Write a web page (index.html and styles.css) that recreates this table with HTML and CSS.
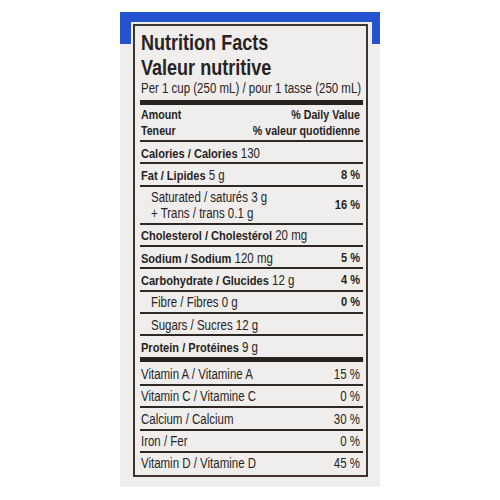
FILE: index.html
```html
<!DOCTYPE html>
<html>
<head>
<meta charset="utf-8">
<link rel="stylesheet" href="styles.css">
</head>
<body>
<div class="panel">
  <div class="sheet">
    <div class="label">
      <div class="inner">
        <div class="title">Nutrition Facts</div>
        <div class="title">Valeur nutritive</div>
        <div class="serving">Per 1 cup (250 mL) / pour 1 tasse (250 mL)</div>
        <div class="thick"></div>
        <div class="head">
          <div class="hrow"><span>Amount</span><span>% Daily Value</span></div>
          <div class="hrow"><span>Teneur</span><span>% valeur quotidienne</span></div>
        </div>
        <div class="row"><span><b>Calories / Calories</b> 130</span></div>
        <div class="row"><span><b>Fat / Lipides</b> 5 g</span><b class="pct">8 %</b></div>
        <div class="row sub">
          <div class="lines"><span>Saturated / saturés 3 g</span><span>+ Trans / trans 0.1 g</span></div>
          <b class="pct">16 %</b>
        </div>
        <div class="row"><span><b>Cholesterol / Cholestérol</b> 20 mg</span></div>
        <div class="row"><span><b>Sodium / Sodium</b> 120 mg</span><b class="pct">5 %</b></div>
        <div class="row"><span><b>Carbohydrate / Glucides</b> 12 g</span><b class="pct">4 %</b></div>
        <div class="row sub"><span>Fibre / Fibres 0 g</span><b class="pct">0 %</b></div>
        <div class="row sub"><span>Sugars / Sucres 12 g</span></div>
        <div class="row"><span><b>Protein / Protéines</b> 9 g</span></div>
        <div class="thick2"></div>
        <div class="vrow first"><span>Vitamin A / Vitamine A</span><span class="pct">15 %</span></div>
        <div class="vrow"><span>Vitamin C / Vitamine C</span><span class="pct">0 %</span></div>
        <div class="vrow"><span>Calcium / Calcium</span><span class="pct">30 %</span></div>
        <div class="vrow"><span>Iron / Fer</span><span class="pct">0 %</span></div>
        <div class="vrow"><span>Vitamin D / Vitamine D</span><span class="pct">45 %</span></div>
      </div>
    </div>
  </div>
</div>
</body>
</html>
```
FILE: styles.css
```css
html, body {
  margin: 0;
  padding: 0;
  background: #ffffff;
}
body {
  font-family: "Liberation Sans", Arial, sans-serif;
  color: #28231f;
}
.panel {
  margin: 12px 0 0 120px;
  width: 260px;
  height: 475px;
  box-sizing: border-box;
  padding: 10px 8px 10px 11px;
  background: linear-gradient(to bottom, #2453cf 0, #2453cf 32px, #efeeec 32px);
}
.sheet {
  background: #efeeec;
  height: 100%;
  box-sizing: border-box;
  padding: 2px 4px 0 2px;
}
.label {
  border: 2px solid #3c3531;
  height: 453px;
  box-sizing: border-box;
  padding: 4px 3px 0 5px;
  overflow: hidden;
}
.inner {
  width: 272px;
  transform: scaleX(0.82);
  transform-origin: 0 0;
}
.title {
  font-weight: bold;
  font-size: 22px;
  line-height: 25px;
  padding-left: 1.2px;
  white-space: nowrap;
}
.serving {
  font-size: 14px;
  line-height: 17px;
  padding-left: 1.2px;
  white-space: nowrap;
}
.thick {
  height: 5px;
  background: #28231f;
  margin-top: 3px;
}
.thick2 {
  height: 5px;
  background: #28231f;
}
.head {
  padding: 1.5px 3.7px 1.5px 1.2px;
  font-weight: bold;
  font-size: 13px;
}
.hrow {
  display: flex;
  justify-content: space-between;
  line-height: 16px;
  white-space: nowrap;
}
.row, .vrow {
  display: flex;
  justify-content: space-between;
  align-items: center;
  border-top: 2px solid #2f2925;
  padding: 2.5px 3.7px 1.8px 1.2px;
  font-size: 14px;
  line-height: 16px;
  white-space: nowrap;
}
.row b {
  font-size: 13.5px;
  line-height: 10px;
}
.vrow.first {
  border-top: none;
  padding-top: 4.5px;
}
.row.sub {
  padding-left: 13.4px;
}
.lines {
  display: flex;
  flex-direction: column;
}
.pct {
  white-space: nowrap;
}
```
